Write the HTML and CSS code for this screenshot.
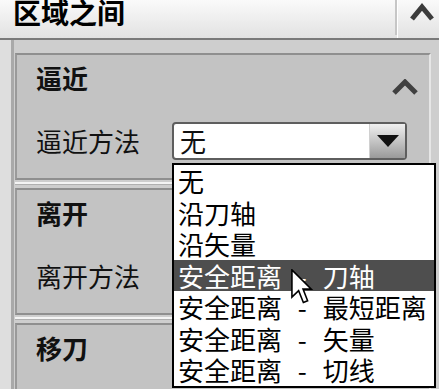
FILE: index.html
```html
<!DOCTYPE html>
<html lang="zh-CN">
<head>
    <meta charset="UTF-8">
    <title>区域之间</title>
    <link rel="stylesheet" href="styles.css">
</head>
<body>

<div class="header">
    <div class="header-title">区域之间</div>
    <div class="header-toggle">
        <svg width="30" height="20" viewBox="0 0 30 20"><path d="M3 17 L13 5 L23 17" fill="none" stroke="#3c3c3c" stroke-width="5"/></svg>
    </div>
</div>

<div class="panel">
    <div class="rail"></div>
    <div class="sections">
        <!-- 逼近 -->
        <div class="section">
            <div class="section-head">
                <span class="section-title">逼近</span>
                <svg class="chevron" width="28" height="16" viewBox="0 0 28 16"><path d="M3 14 L14 3 L25 14" fill="none" stroke="#404040" stroke-width="5"/></svg>
            </div>
            <div class="row">
                <span class="label">逼近方法</span>
                <div class="combo">
                    <div class="combo-value">无</div>
                    <div class="combo-button">
                        <svg width="24" height="14" viewBox="0 0 24 14"><path d="M1 1 L23 1 L12 13 Z" fill="#111"/></svg>
                    </div>
                    <div class="dropdown">
                        <div class="option">无</div>
                        <div class="option">沿刀轴</div>
                        <div class="option">沿矢量</div>
                        <div class="option selected">安全距离 - 刀轴</div>
                        <div class="option">安全距离 - 最短距离</div>
                        <div class="option">安全距离 - 矢量</div>
                        <div class="option">安全距离 - 切线</div>
                    </div>
                </div>
            </div>
        </div>
        <div class="sep"></div>

        <!-- 离开 -->
        <div class="section">
            <div class="section-head">
                <span class="section-title">离开</span>
            </div>
            <div class="row">
                <span class="label">离开方法</span>
            </div>
        </div>
        <div class="sep"></div>

        <!-- 移刀 -->
        <div class="section">
            <div class="section-head">
                <span class="section-title">移刀</span>
            </div>
        </div>
    </div>
</div>

<svg class="cursor" width="23" height="37" viewBox="0 0 13 21">
    <path d="M0.5 0.5 L0.5 16 L4.3 12.3 L7 19 L9.4 18 L6.8 11.4 L11.5 11.4 Z" fill="#fff" stroke="#000" stroke-width="0.9" stroke-linejoin="miter"/>
</svg>

</body>
</html>
```

FILE: styles.css
```css
* {
    margin: 0;
    padding: 0;
    box-sizing: border-box;
}

body {
    width: 439px;
    height: 389px;
    overflow: hidden;
    position: relative;
    background-color: #cecece;
    font-family: "Noto Sans CJK SC", sans-serif;
    color: #111;
}

.header {
    height: 40px;
    display: flex;
    align-items: flex-start;
    background: linear-gradient(#fafafa, #e2e2e2);
    border-bottom: 2px solid #7a7a7a;
}

.header-title {
    width: 401px;
    height: 38px;
    padding-left: 13px;
    margin-top: -3px;
    font-size: 28px;
    line-height: 30px;
    font-weight: bold;
    color: #000;
    border-right: 2px solid #c6c6c6;
}

.header-toggle {
    flex: 1;
    padding: 2px 0 0 11px;
    border-left: 1px solid #fff;
    height: 38px;
}

.panel {
    display: flex;
    height: 349px;
    overflow: hidden;
}

.rail {
    width: 14px;
    background-color: #dedede;
    border-right: 3px solid #a9a9a9;
}

.sections {
    flex: 1;
    padding: 13px 8px 0 1px;
}

.section {
    height: 127px;
    background-color: #c3c3c3;
    border-top: 2px solid #8f8f8f;
    border-left: 2px solid #9a9a9a;
    border-bottom: 2px solid #8f8f8f;
    border-right: 2px solid #e6e6e6;
    padding: 8px 10px 0 19px;
}

.sep {
    height: 3px;
    margin: 2px 0 3px;
    background-color: #f4f4f4;
    border-bottom: 1px solid #b0b0b0;
}

.section-head {
    display: flex;
    justify-content: space-between;
    align-items: flex-end;
    height: 30px;
}

.section-title {
    font-size: 26px;
    line-height: 30px;
    font-weight: bold;
}

.chevron {
    margin-bottom: -2px;
}

.row {
    display: flex;
    align-items: center;
    margin-top: 29px;
    height: 38px;
}

.label {
    width: 136px;
    font-size: 26px;
    line-height: 30px;
}

.combo {
    position: relative;
    width: 235px;
    height: 38px;
    display: flex;
    background-color: #fff;
    border: 2px solid #5e5e5e;
    border-radius: 4px;
}

.combo-value {
    flex: 1;
    padding-left: 6px;
    font-size: 26px;
    line-height: 34px;
}

.combo-button {
    width: 36px;
    display: flex;
    align-items: center;
    justify-content: center;
    background: linear-gradient(#f0f0f0, #9a9a9a);
    border-left: 1px solid #d0d0d0;
}

.dropdown {
    position: absolute;
    top: 39px;
    left: -2px;
    width: 264px;
    background-color: #fff;
    border: 2px solid #000;
    padding: 0 2px;
}

.option {
    height: 31.5px;
    padding-left: 2px;
    font-size: 26px;
    line-height: 31.5px;
    white-space: pre;
    word-spacing: 10px;
    color: #000;
}

.option.selected {
    background-color: #4e4e4e;
    color: #fff;
    margin: 0 -2px;
    padding-left: 4px;
}

.cursor {
    position: absolute;
    left: 291px;
    top: 269px;
}
```
